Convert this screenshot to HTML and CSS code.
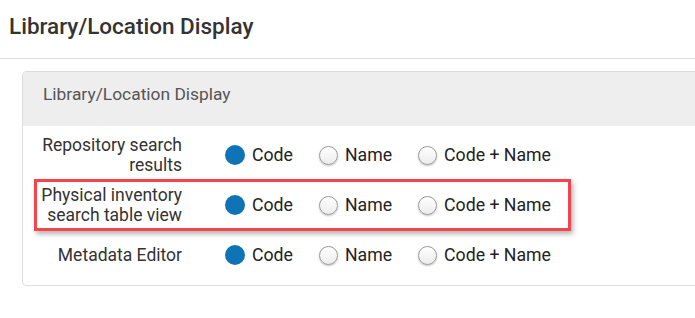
FILE: index.html
```html
<!DOCTYPE html>
<html>
<head>
<meta charset="utf-8">
<link rel="stylesheet" href="styles.css">
</head>
<body>
<div class="page">
  <div class="page-title">Library/Location Display</div>
  <div class="content">
    <div class="panel">
      <div class="panel-header">Library/Location Display</div>
      <div class="panel-body">
        <div class="row">
          <div class="label">Repository search results</div>
          <div class="options">
            <label class="opt"><span class="radio checked"></span>Code</label>
            <label class="opt"><span class="radio"></span>Name</label>
            <label class="opt"><span class="radio"></span>Code + Name</label>
          </div>
        </div>
        <div class="row highlight">
          <div class="label">Physical inventory search table view</div>
          <div class="options">
            <label class="opt"><span class="radio checked"></span>Code</label>
            <label class="opt"><span class="radio"></span>Name</label>
            <label class="opt"><span class="radio"></span>Code + Name</label>
          </div>
        </div>
        <div class="row">
          <div class="label">Metadata Editor</div>
          <div class="options">
            <label class="opt"><span class="radio checked"></span>Code</label>
            <label class="opt"><span class="radio"></span>Name</label>
            <label class="opt"><span class="radio"></span>Code + Name</label>
          </div>
        </div>
      </div>
    </div>
  </div>
</div>
</body>
</html>
```

FILE: styles.css
```css
html, body {
  margin: 0;
  padding: 0;
  background: #fff;
}
body {
  font-family: Roboto, "Liberation Sans", sans-serif;
  color: #333;
  overflow: hidden;
}
.page {
  width: 695px;
  overflow: hidden;
}
.page-title {
  height: 59px;
  box-sizing: border-box;
  padding: 12px 0 0 9px;
  font-size: 22.5px;
  font-weight: 500;
  line-height: 28px;
  color: #333;
  border-bottom: 1px solid #ddd;
}
.content {
  padding: 12px 0 0 22px;
}
.panel {
  margin-right: -20px;
  border: 1px solid #ddd;
  border-radius: 4px;
  background: #fff;
}
.panel-header {
  height: 54px;
  box-sizing: border-box;
  padding: 11px 20px 0 20px;
  background: #eee;
  font-size: 17.4px;
  line-height: 22px;
  color: #555;
  border-radius: 4px 4px 0 0;
}
.panel-body {
  padding: 4px 0 5px 0;
}
.row {
  position: relative;
  display: flex;
  align-items: center;
  height: 50px;
}
.label {
  width: 159px;
  text-align: right;
  font-size: 17.5px;
  line-height: 20px;
  color: #333;
}
.options {
  display: flex;
  align-items: center;
  margin-left: 44px;
  gap: 26px;
}
.opt {
  display: flex;
  align-items: center;
  gap: 7px;
  font-size: 17.7px;
  color: #222;
}
.radio {
  width: 19px;
  height: 19px;
  box-sizing: border-box;
  border-radius: 50%;
  border: 1px solid #9a9a9a;
  background: linear-gradient(#fff, #ececec);
  box-shadow: 0 1px 2px rgba(0,0,0,0.25);
}
.radio.checked {
  border: none;
  width: 20px;
  height: 20px;
  margin: -1px 0 -1px -1px;
  background: #0f74b5;
  box-shadow: none;
}
.row.highlight::after {
  content: "";
  position: absolute;
  left: 11px;
  top: -1px;
  width: 537px;
  height: 52px;
  box-sizing: border-box;
  border: 3px solid #f4444c;
  box-shadow: 2px 3px 5px rgba(0,0,0,0.3);
  pointer-events: none;
}
```
